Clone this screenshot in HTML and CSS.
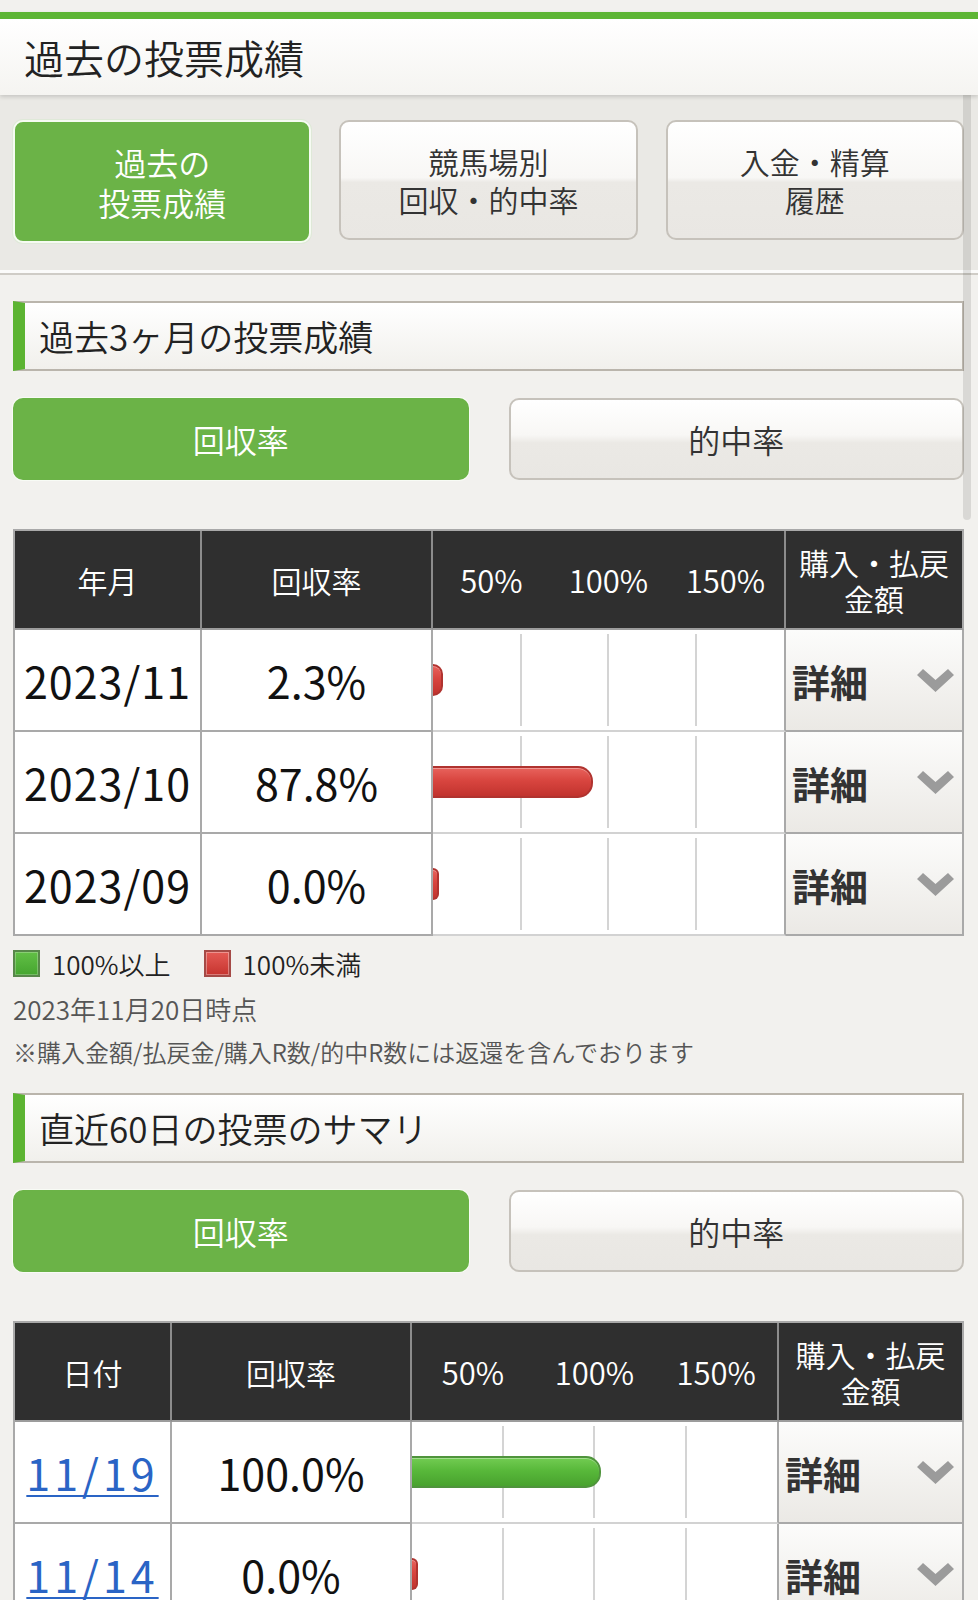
FILE: index.html
```html
<!DOCTYPE html>
<html lang="ja">
  <head>
    <meta charset="UTF-8" />
    <meta name="viewport" content="width=device-width, initial-scale=1.0" />
    <title>過去の投票成績</title>
    <link rel="stylesheet" href="styles.css">
  </head>
  <body>
    <header class="page-head">
      <h1>過去の投票成績</h1>
    </header>

    <nav class="tabs">
      <a class="tab active" href="#">過去の<br>投票成績</a>
      <a class="tab" href="#">競馬場別<br>回収・的中率</a>
      <a class="tab" href="#">入金・精算<br>履歴</a>
    </nav>

    <main class="content">
      <section class="block">
        <h2 class="sec-title">過去3ヶ月の投票成績</h2>
        <div class="switch">
          <button class="switch-btn on">回収率</button>
          <button class="switch-btn">的中率</button>
        </div>

        <table class="rate-table">
          <colgroup>
            <col style="width: 187px">
            <col style="width: 231px">
            <col style="width: 353px">
            <col>
          </colgroup>
          <thead>
            <tr>
              <th>年月</th>
              <th>回収率</th>
              <th class="scale"><span>50%</span><span>100%</span><span>150%</span></th>
              <th class="small">購入・払戻<br>金額</th>
            </tr>
          </thead>
          <tbody>
            <tr>
              <td class="date">2023/11</td>
              <td class="num">2.3%</td>
              <td class="chart"><div class="track"><div class="bar low" style="width: calc(1.15% + 6px)"></div></div></td>
              <td class="more"><div class="more-btn"><span>詳細</span><svg viewBox="0 0 37 23" width="37" height="23"><polygon points="0,6 6,0 18.5,11 31,0 37,6 18.5,23" /></svg></div></td>
            </tr>
            <tr>
              <td class="date">2023/10</td>
              <td class="num">87.8%</td>
              <td class="chart"><div class="track"><div class="bar low" style="width: calc(43.9% + 6px)"></div></div></td>
              <td class="more"><div class="more-btn"><span>詳細</span><svg viewBox="0 0 37 23" width="37" height="23"><polygon points="0,6 6,0 18.5,11 31,0 37,6 18.5,23" /></svg></div></td>
            </tr>
            <tr>
              <td class="date">2023/09</td>
              <td class="num">0.0%</td>
              <td class="chart"><div class="track"><div class="bar low" style="width: calc(0% + 6px)"></div></div></td>
              <td class="more"><div class="more-btn"><span>詳細</span><svg viewBox="0 0 37 23" width="37" height="23"><polygon points="0,6 6,0 18.5,11 31,0 37,6 18.5,23" /></svg></div></td>
            </tr>
          </tbody>
        </table>

        <div class="legend">
          <span class="swatch high"></span><span class="legend-text">100%以上</span>
          <span class="swatch low"></span><span class="legend-text">100%未満</span>
        </div>
        <p class="asof">2023年11月20日時点</p>
        <p class="note">※購入金額/払戻金/購入R数/的中R数には返還を含んでおります</p>
      </section>

      <section class="block">
        <h2 class="sec-title">直近60日の投票のサマリ</h2>
        <div class="switch">
          <button class="switch-btn on">回収率</button>
          <button class="switch-btn">的中率</button>
        </div>

        <table class="rate-table">
          <colgroup>
            <col style="width: 157px">
            <col style="width: 240px">
            <col style="width: 367px">
            <col>
          </colgroup>
          <thead>
            <tr>
              <th>日付</th>
              <th>回収率</th>
              <th class="scale"><span>50%</span><span>100%</span><span>150%</span></th>
              <th class="small">購入・払戻<br>金額</th>
            </tr>
          </thead>
          <tbody>
            <tr>
              <td class="date"><a href="#">11/19</a></td>
              <td class="num">100.0%</td>
              <td class="chart"><div class="track"><div class="bar high" style="width: calc(50% + 6px)"></div></div></td>
              <td class="more"><div class="more-btn"><span>詳細</span><svg viewBox="0 0 37 23" width="37" height="23"><polygon points="0,6 6,0 18.5,11 31,0 37,6 18.5,23" /></svg></div></td>
            </tr>
            <tr>
              <td class="date"><a href="#">11/14</a></td>
              <td class="num">0.0%</td>
              <td class="chart"><div class="track"><div class="bar low" style="width: calc(0% + 6px)"></div></div></td>
              <td class="more"><div class="more-btn"><span>詳細</span><svg viewBox="0 0 37 23" width="37" height="23"><polygon points="0,6 6,0 18.5,11 31,0 37,6 18.5,23" /></svg></div></td>
            </tr>
          </tbody>
        </table>
      </section>
    </main>

    <div class="scroll-ind"></div>
  </body>
</html>
```

FILE: styles.css
```css
body {
  margin: 0;
  padding-top: 12px;
  background-color: #f2f1ee;
  font-family: "Noto Sans CJK JP", sans-serif;
  font-weight: 350;
  color: #222;
  overflow: hidden;
}
.page-head {
  border-top: 7px solid #5db535;
  height: 76px;
  background: linear-gradient(#ffffff, #f5f4f1);
  box-shadow: 0 2px 4px rgba(0, 0, 0, 0.15);
  position: relative;
  z-index: 1;
}
h1 {
  margin: 0;
  padding-left: 24px;
  font-size: 40px;
  font-weight: 350;
  line-height: 76px;
  color: #222;
}
.tabs {
  display: grid;
  grid-template-columns: repeat(3, 1fr);
  gap: 28px;
  padding: 25px 14px 30px 13px;
  background-color: #eae9e5;
  border-bottom: 2px solid #cfccc6;
  box-shadow: inset 0 -3px 0 #fbfbfa;
}
.tab {
  display: flex;
  align-items: center;
  justify-content: center;
  height: 116px;
  text-align: center;
  font-size: 30px;
  line-height: 38px;
  color: #333;
  text-decoration: none;
  border: 2px solid #c6c2bb;
  border-radius: 10px;
  background: linear-gradient(#ffffff 0%, #f8f7f5 48%, #ebe9e5 52%, #e9e7e3 100%);
}
.tab.active {
  height: 119px;
  font-size: 32px;
  line-height: 40px;
  color: #fff;
  background: #6bb347;
  border-color: #f6fbf2;
  box-shadow: 0 0 0 1px #dfe9d8;
}
.content {
  padding: 0 14px 0 13px;
}
.block {
  padding-top: 26px;
}
.block + .block {
  padding-top: 24px;
}
.sec-title {
  margin: 0;
  height: 66px;
  padding-left: 14px;
  font-size: 35px;
  font-weight: 350;
  line-height: 66px;
  color: #222;
  border: 2px solid #bab5ac;
  border-left: 12px solid #5cb432;
  background: linear-gradient(#ffffff, #f1f0ec);
}
.switch {
  display: grid;
  grid-template-columns: 1fr 1fr;
  gap: 40px;
  margin-top: 27px;
}
.switch-btn {
  height: 82px;
  font-family: inherit;
  font-size: 32px;
  font-weight: 350;
  color: #333;
  border: 2px solid #c6c2bb;
  border-radius: 10px;
  background: linear-gradient(#ffffff 0%, #f8f7f5 45%, #ebe9e5 55%, #e9e7e3 100%);
  padding: 0;
}
.switch-btn.on {
  color: #fff;
  background: #6bb347;
  border-color: #6bb347;
  box-shadow: 0 0 0 1px #f8fbf5;
}
.rate-table {
  width: 100%;
  margin-top: 49px;
  table-layout: fixed;
  border-collapse: separate;
  border-spacing: 0;
  border-top: 2px solid #a9a9a9;
  border-left: 2px solid #a9a9a9;
}
.rate-table th {
  height: 97px;
  padding: 0;
  background-color: #2f2f2f;
  color: #fff;
  font-size: 30px;
  font-weight: 350;
  border-right: 2px solid #8c8c8c;
  border-bottom: 2px solid #9c9c9c;
}
.rate-table th.small {
  line-height: 36px;
}
.rate-table th.scale {
  font-size: 31px;
}
.rate-table th.scale span {
  display: inline-block;
  width: 33.33%;
  text-align: center;
}
.rate-table th:last-child,
.rate-table td:last-child {
  border-right-color: #a9a9a9;
}
.rate-table td {
  height: 100px;
  padding: 0;
  background-color: #fff;
  text-align: center;
  font-size: 43px;
  font-weight: 400;
  color: #111;
  border-right: 2px solid #a9a9a9;
  border-bottom: 2px solid #a9a9a9;
}
.rate-table td.date {
  letter-spacing: 1px;
}
.rate-table td.date a {
  color: #2a64c5;
  letter-spacing: 4px;
  text-decoration: underline;
  text-decoration-thickness: 2px;
  text-underline-offset: 4px;
}
.rate-table td.chart {
  border-bottom-color: #d2d2d2;
}
.track {
  display: flex;
  align-items: center;
  height: 92px;
  margin: 4px 0;
  background:
    linear-gradient(to right, transparent calc(25% - 1px), #d4d4d4 calc(25% - 1px), #d4d4d4 calc(25% + 1px), transparent calc(25% + 1px)),
    linear-gradient(to right, transparent calc(50% - 1px), #d4d4d4 calc(50% - 1px), #d4d4d4 calc(50% + 1px), transparent calc(50% + 1px)),
    linear-gradient(to right, transparent calc(75% - 1px), #d4d4d4 calc(75% - 1px), #d4d4d4 calc(75% + 1px), transparent calc(75% + 1px));
}
.bar {
  box-sizing: border-box;
  height: 32px;
  border: 2px solid;
  border-left: none;
  border-radius: 0 15px 15px 0;
}
.bar.low {
  border-color: #b0332f;
  background: linear-gradient(#e8625c, #d8453f 45%, #c1332e 100%);
  box-shadow: inset 0 1px 0 rgba(255, 255, 255, 0.35);
}
.bar.high {
  border-color: #4f943c;
  background: linear-gradient(#72cc52, #58b83a 45%, #48a22e 100%);
  box-shadow: inset 0 1px 0 rgba(255, 255, 255, 0.35);
}
.rate-table td.more {
  background: linear-gradient(#fcfcfb, #ebe9e5);
}
.more-btn {
  display: flex;
  align-items: center;
  justify-content: space-between;
  padding: 0 8px 0 6px;
}
.more-btn span {
  font-size: 38px;
  font-weight: bold;
  color: #333;
}
.more-btn svg {
  fill: #9b9b9b;
}
.legend {
  display: flex;
  align-items: center;
  margin-top: 9px;
  font-size: 26px;
  color: #222;
}
.swatch {
  box-sizing: border-box;
  width: 27px;
  height: 27px;
  border: 2px solid;
  margin-right: 12px;
}
.swatch.high {
  border-color: #58874a;
  background: linear-gradient(#62c046, #45a52f);
  box-shadow: inset 0 0 0 1px rgba(255, 255, 255, 0.25);
}
.swatch.low {
  border-color: #a54a46;
  background: linear-gradient(#e45a54, #c6342f);
  box-shadow: inset 0 0 0 1px rgba(255, 255, 255, 0.35);
  margin-left: 33px;
}
.asof {
  margin: 8px 0 0;
  font-size: 26px;
  color: #555;
}
.note {
  margin: 7px 0 0;
  font-size: 24px;
  color: #555;
}
.scroll-ind {
  position: absolute;
  top: 40px;
  left: 963px;
  width: 8px;
  height: 480px;
  border-radius: 4px;
  background-color: rgba(0, 0, 0, 0.1);
}
```
